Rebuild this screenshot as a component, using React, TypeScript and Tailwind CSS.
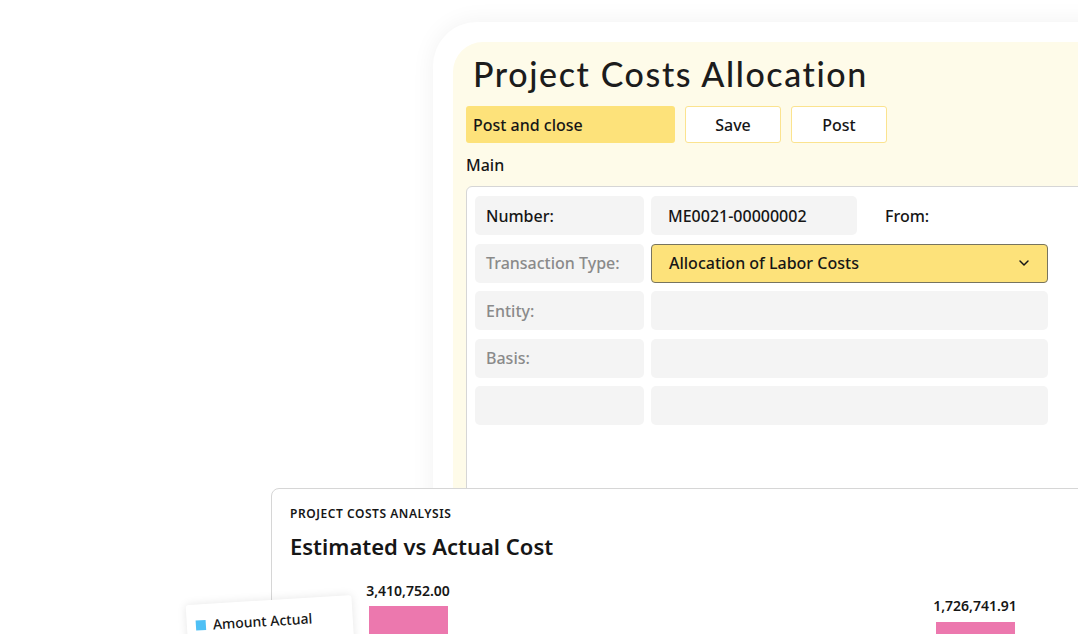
import React from "react";

const body = { fontFamily: '"Noto Sans", "Open Sans", Arial, sans-serif' };
const title = { fontFamily: 'Lato, "Open Sans", Arial, sans-serif' };

function Row({ label, muted, children }: { label?: string; muted?: boolean; children?: React.ReactNode }) {
  return (
    <div className="flex h-[39px] gap-[7px]">
      <div
        className={`flex w-[169px] shrink-0 items-center rounded-[5px] bg-[#f4f4f4] pl-[11px] text-[16px] font-medium ${
          muted ? "text-[#8a8a8a]" : "text-[#161616]"
        }`}
      >
        {label}
      </div>
      {children ?? <div className="w-[397px] rounded-[5px] bg-[#f4f4f4]" />}
    </div>
  );
}

export default function App() {
  return (
    <div className="relative h-[634px] w-[1078px] overflow-hidden bg-white" style={body}>
      {/* Outer window */}
      <div className="absolute left-[433px] top-[22px] h-[700px] w-[720px] rounded-tl-[44px] bg-white pl-[20px] pt-[20px] shadow-[0_0_24px_rgba(0,0,0,0.06)]">
        <div className="flex h-full flex-col rounded-tl-[30px] bg-[#fefbe9] pl-[13px]">
          <h1
            className="ml-[7px] mt-[12px] text-[34px] font-medium leading-[40px] tracking-[1.6px] text-[#1c1c1c]"
            style={title}
          >
            Project Costs Allocation
          </h1>
          <div className="mt-[12px] flex gap-[10px]">
            <div className="flex h-[37px] w-[209px] items-center rounded-[3px] bg-[#fde27a] pl-[7px] text-[16px] font-medium text-[#161616]">
              Post and close
            </div>
            <div className="flex h-[37px] w-[96px] items-center justify-center rounded-[3px] border border-[#fbe38f] bg-white text-[16px] font-medium text-[#161616]">
              Save
            </div>
            <div className="flex h-[37px] w-[96px] items-center justify-center rounded-[3px] border border-[#fbe38f] bg-white text-[16px] font-medium text-[#161616]">
              Post
            </div>
          </div>
          <div className="mt-[11px] text-[16px] font-medium leading-[22px] text-[#161616]">Main</div>
          <div className="mt-[10px] flex h-[320px] flex-col gap-[8.5px] rounded-tl-[6px] border border-[#d6d6d6] bg-white pl-[8px] pt-[9px]">
            <Row label="Number:">
              <div className="flex w-[206px] items-center rounded-[5px] bg-[#f4f4f4] pl-[17px] text-[16px] font-medium text-[#161616]">
                ME0021-00000002
              </div>
              <div className="flex items-center pl-[21px] text-[16px] font-medium text-[#161616]">From:</div>
            </Row>
            <Row label="Transaction Type:" muted>
              <div className="flex w-[397px] items-center justify-between rounded-[4px] border border-[#77745f] bg-[#fde27a] pl-[17px] pr-[15px] text-[16px] font-medium text-[#161616]">
                <span>Allocation of Labor Costs</span>
                <svg width="16" height="16" viewBox="0 0 24 24" fill="none" stroke="#161616" strokeWidth="2.2" strokeLinecap="round" strokeLinejoin="round">
                  <path d="M6 9l6 6 6-6" />
                </svg>
              </div>
            </Row>
            <Row label="Entity:" muted />
            <Row label="Basis:" muted />
            <Row />
          </div>
        </div>
      </div>

      {/* Chart card */}
      <div className="absolute left-[271px] top-[488px] h-[200px] w-[830px] rounded-tl-[8px] border border-[#d6d6d6] bg-white pl-[18px] pt-[17px]">
        <div className="text-[12px] font-semibold uppercase leading-[16px] tracking-[0.55px] text-[#161616]">
          Project Costs Analysis
        </div>
        <div className="mt-[10px] text-[22px] font-semibold leading-[28px] text-[#161616]">
          Estimated vs Actual Cost
        </div>
        <div className="absolute left-[76px] top-[93px] flex w-[120px] flex-col items-center">
          <div className="text-[14px] font-semibold leading-[18px] text-[#161616]">3,410,752.00</div>
          <div className="mt-[6px] h-[60px] w-[79px] bg-[#ec78ae]" />
        </div>
        <div className="absolute left-[643px] top-[108px] flex w-[120px] flex-col items-center">
          <div className="text-[14px] font-semibold leading-[18px] text-[#161616]">1,726,741.91</div>
          <div className="mt-[7px] h-[60px] w-[79px] bg-[#ec78ae]" />
        </div>
      </div>

      {/* Legend chip */}
      <div className="absolute left-[187px] top-[600px] h-[50px] w-[166px] -rotate-[3.5deg] rounded-[3px] bg-white pl-[9px] pt-[10px] shadow-[0_0_10px_rgba(0,0,0,0.10)]">
        <div className="flex items-center gap-[7px]">
          <div className="h-[10px] w-[10px] bg-[#4ec0f5]" />
          <span className="text-[14px] font-medium text-[#161616]">Amount Actual</span>
        </div>
      </div>
    </div>
  );
}
